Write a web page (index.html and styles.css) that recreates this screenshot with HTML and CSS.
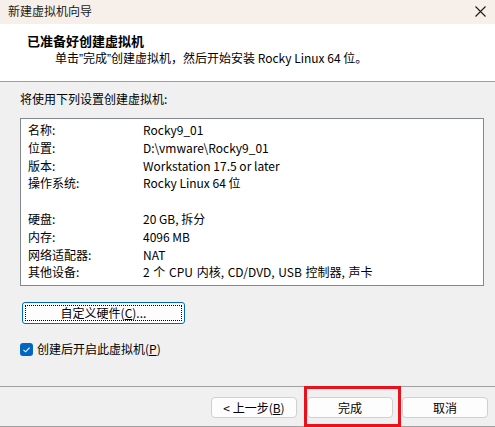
FILE: index.html
```html
<!DOCTYPE html>
<html lang="zh-CN">
<head>
<meta charset="utf-8">
<link rel="stylesheet" href="styles.css">
</head>
<body>
<div class="window">
  <div class="titlebar">
    <span class="title">新建虚拟机向导</span>
    <svg class="close" width="11" height="11" viewBox="0 0 11 11"><path d="M0.5 0.5 L10.5 10.5 M10.5 0.5 L0.5 10.5" stroke="#1a1a1a" stroke-width="1.1" fill="none"/></svg>
  </div>
  <div class="header">
    <div class="heading">已准备好创建虚拟机</div>
    <div class="sub">单击<span class="q">”</span>完成<span class="q">”</span>创建虚拟机，然后开始安装 Rocky Linux 64 位。</div>
  </div>
  <div class="content">
    <div class="intro">将使用下列设置创建虚拟机:</div>
    <div class="listbox">
      <div class="row"><span class="k">名称:</span><span class="v">Rocky9_01</span></div>
      <div class="row"><span class="k">位置:</span><span class="v">D:\vmware\Rocky9_01</span></div>
      <div class="row"><span class="k">版本:</span><span class="v">Workstation 17.5 or later</span></div>
      <div class="row"><span class="k">操作系统:</span><span class="v">Rocky Linux 64 位</span></div>
      <div class="row"><span class="k"></span><span class="v"></span></div>
      <div class="row"><span class="k">硬盘:</span><span class="v">20 GB, 拆分</span></div>
      <div class="row"><span class="k">内存:</span><span class="v">4096 MB</span></div>
      <div class="row"><span class="k">网络适配器:</span><span class="v">NAT</span></div>
      <div class="row"><span class="k">其他设备:</span><span class="v wide">2 个 CPU 内核, CD/DVD, USB 控制器, 声卡</span></div>
    </div>
    <button class="custom"><span class="focus">自定义硬件(<u>C</u>)...</span></button>
    <label class="check">
      <span class="box"><svg width="13" height="13" viewBox="0 0 13 13"><path d="M3.5 6.8 L5.6 8.8 L9.6 4.6" stroke="#fff" stroke-width="1.1" fill="none"/></svg></span>
      <span>创建后开启此虚拟机(<u>P</u>)</span>
    </label>
  </div>
  <div class="footer">
    <button class="btn">&lt; 上一步(<u>B</u>)</button>
    <button class="btn">完成</button>
    <button class="btn">取消</button>
  </div>
  <div class="highlight"></div>
</div>
</body>
</html>
```

FILE: styles.css
```css
* { box-sizing: border-box; }
html, body { margin: 0; padding: 0; }
body {
  width: 495px;
  height: 427px;
  background: #f0f0f0;
  font-family: "Noto Sans CJK SC", "Noto Sans", sans-serif;
  font-size: 12px;
  color: #000;
  overflow: hidden;
}
.window {
  position: relative;
  width: 495px;
  height: 427px;
  display: flex;
  flex-direction: column;
}
.titlebar {
  height: 24px;
  background: #f7efea;
  display: flex;
  align-items: center;
  justify-content: space-between;
  padding: 0 9px 2px 8px;
  line-height: 18px;
}
.title { color: #1a1a1a; }
.header {
  height: 58px;
  background: #fff;
  border-bottom: 1px solid #a0a0a0;
  padding: 8px 0 0 27px;
  line-height: 17px;
}
.heading { font-weight: bold; font-size: 13px; }
.sub { padding-left: 28px; }
.q { font-family: "Liberation Sans", sans-serif; }
.content {
  height: 304px;
  padding: 8px 0 0 20px;
  display: flex;
  flex-direction: column;
  align-items: flex-start;
}
.intro { line-height: 18px; }
.listbox {
  margin-top: 10px;
  width: 464px;
  height: 168px;
  background: #fff;
  border: 1px solid #828790;
  padding: 2px 0 0 7px;
}
.row { display: flex; height: 17.8px; line-height: 17.8px; }
.k { width: 115px; flex: none; }
.v { white-space: nowrap; }
.wide { word-spacing: 1px; }
.custom {
  margin: 16px 0 0 2px;
  width: 163px;
  height: 22px;
  padding: 2px;
  border: 1px solid #0067c0;
  border-radius: 3px;
  background: #fdfdfd;
  font: inherit;
  color: #000;
  display: flex;
}
.focus {
  flex: 1;
  border: 1px dotted #000;
  display: flex;
  align-items: center;
  justify-content: center;
  line-height: 14px;
}
.check {
  margin-top: 17px;
  display: flex;
  align-items: center;
  gap: 4px;
  line-height: 16px;
}
.box {
  width: 13px;
  height: 13px;
  border-radius: 3px;
  background: #0067c0;
  display: flex;
}
.footer {
  flex: 1;
  border-top: 1px solid #a0a0a0;
  border-bottom: 1px solid #a0a0a0;
  display: flex;
  justify-content: flex-end;
  align-items: flex-start;
  padding: 10px 7px 0 0;
  gap: 9px;
}
.btn {
  width: 86px;
  height: 21px;
  background: #fdfdfd;
  border: 1px solid #d0d0d0;
  border-radius: 4px;
  font: inherit;
  color: #000;
  padding: 0;
  line-height: 18px;
}
.btn:first-child { margin-right: 1px; }
u { text-decoration: underline; text-underline-offset: 1px; }
.highlight {
  position: absolute;
  left: 304px;
  top: 386px;
  width: 97px;
  height: 41px;
  border: 3px solid #e8111c;
}
```
